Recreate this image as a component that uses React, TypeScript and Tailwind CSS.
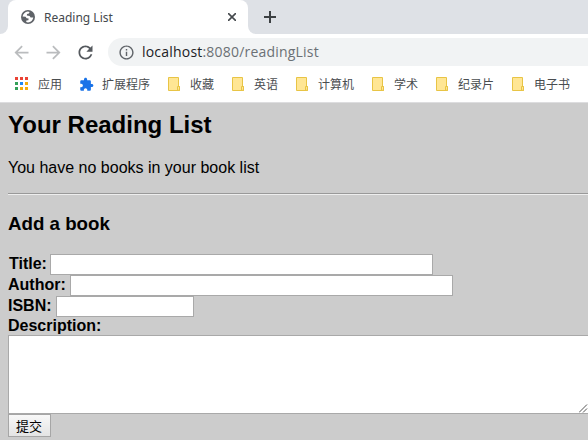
import React from 'react';

function Icon({ d, className }: { d: string; className: string }) {
  return (
    <svg viewBox="0 0 24 24" fill="currentColor" className={className}>
      <path d={d} />
    </svg>
  );
}

const paths = {
  back: 'M20 11H7.83l5.59-5.59L12 4l-8 8 8 8 1.41-1.41L7.83 13H20v-2z',
  forward: 'M12 4l-1.41 1.41L16.17 11H4v2h12.17l-5.58 5.59L12 20l8-8z',
  reload:
    'M17.65 6.35C16.2 4.9 14.21 4 12 4c-4.42 0-7.99 3.58-7.99 8s3.57 8 7.99 8c3.73 0 6.84-2.55 7.73-6h-2.08c-.82 2.33-3.04 4-5.65 4-3.31 0-6-2.69-6-6s2.69-6 6-6c1.66 0 3.14.69 4.22 1.78L13 11h7V4l-2.35 2.35z',
  info: 'M11 17h2v-6h-2v6zm1-15C6.48 2 2 6.48 2 12s4.48 10 10 10 10-4.48 10-10S17.52 2 12 2zm0 18c-4.41 0-8-3.59-8-8s3.59-8 8-8 8 3.59 8 8-3.59 8-8 8zM11 9h2V7h-2v2z',
  puzzle:
    'M20.5 11H19V7c0-1.1-.9-2-2-2h-4V3.5C13 2.12 11.88 1 10.5 1S8 2.12 8 3.5V5H4c-1.1 0-1.99.9-1.99 2v3.8H3.5c1.49 0 2.7 1.21 2.7 2.7s-1.21 2.7-2.7 2.7H2V20c0 1.1.9 2 2 2h3.8v-1.5c0-1.49 1.21-2.7 2.7-2.7 1.49 0 2.7 1.21 2.7 2.7V22H17c1.1 0 2-.9 2-2v-4h1.5c1.38 0 2.5-1.12 2.5-2.5S21.88 11 20.5 11z',
};

const dots = [
  'bg-[#ea4335]', 'bg-[#ea4335]', 'bg-[#ea4335]',
  'bg-[#34a058]', 'bg-[#1e88f5]', 'bg-[#f5ac0a]',
  'bg-[#34a058]', 'bg-[#f5ac0a]', 'bg-[#f5ac0a]',
];

function GlobeIcon() {
  return (
    <svg viewBox="0 0 14 14" className="size-[14px] shrink-0">
      <circle cx="7" cy="7" r="7" fill="#5f6368" />
      <path
        d="M1.6 6.6C1.9 4 4 1.9 6.9 1.6L8.6 2.1 7.9 3.5 6 4.1 5.8 5.6 8.6 5.9 9.6 7.4 12.3 7.5C12 10.1 9.8 12.3 7 12.4L5.2 12 5.4 10.6 7.4 10.2 7.6 8.6 5.6 8.2 4.6 6.7z"
        fill="white"
      />
    </svg>
  );
}

function AppsIcon() {
  return (
    <span className="ml-px grid w-[15px] grid-cols-[3px_3px_3px] gap-[2px] pb-px">
      {dots.map((c, i) => (
        <i key={i} className={`size-[3px] ${c}`} />
      ))}
    </span>
  );
}

function FolderIcon() {
  return (
    <svg viewBox="0 0 16 16" className="size-4" fill="#ffe694" stroke="#e8c445">
      <path d="M2.5 1.5h10v9h1v4h-11z" />
      <path d="M11.5 14v-3.5h2v4z" />
    </svg>
  );
}

function Bookmark({ icon, label }: { icon: React.ReactNode; label: string }) {
  return (
    <div className="flex shrink-0 items-center gap-2">
      {icon}
      <span>{label}</span>
    </div>
  );
}

function Field({ label, labelClass, inputClass }: { label: string; labelClass: string; inputClass: string }) {
  return (
    <label className="flex h-[21px]">
      <span className={`shrink-0 leading-[19px] ${labelClass}`}>{label}</span>
      <input type="text" className={`h-[21px] rounded-none border border-[#a9a9a9] bg-white ${inputClass}`} />
    </label>
  );
}

export default function App() {
  return (
    <div className="flex h-[440px] w-[588px] flex-col overflow-hidden bg-[#cccccc] font-['Liberation_Sans',Arial,sans-serif] text-black">
      <div className="flex h-[34px] shrink-0 bg-[#dee1e6]">
        <div className="flex w-2 items-end bg-white">
          <span className="h-[34px] w-2 rounded-br-lg bg-[#dee1e6]" />
        </div>
        <div className="w-60 bg-[#dee1e6]">
          <div className="flex h-[34px] items-center rounded-t-lg bg-white pl-[13px] text-[#45494d]">
            <GlobeIcon />
            <span className="ml-[9px] w-[179px] pt-px font-['Noto_Sans','Open_Sans',sans-serif] text-[12px] leading-4">
              Reading List
            </span>
            <svg viewBox="0 0 8 8" className="ml-[5px] size-2 shrink-0" stroke="#45494d" strokeWidth="1.6">
              <path d="M0 0l8 8M8 0L0 8" />
            </svg>
          </div>
        </div>
        <div className="flex grow bg-white">
          <div className="flex grow items-center rounded-bl-lg bg-[#dee1e6] pl-4">
            <svg viewBox="0 0 12 12" className="size-3" stroke="#3c4043" strokeWidth="2">
              <path d="M6 0v12M0 6h12" />
            </svg>
          </div>
        </div>
      </div>

      <div className="flex h-9 shrink-0 items-center bg-white pl-[11px]">
        <Icon d={paths.back} className="size-[21px] shrink-0 text-[#babcbe]" />
        <Icon d={paths.forward} className="ml-[11px] size-[21px] shrink-0 text-[#babcbe]" />
        <Icon d={paths.reload} className="ml-[11px] size-[21px] shrink-0 text-[#55595e]" />
        <div className="ml-3 flex h-7 grow items-center rounded-l-full bg-[#f1f3f4] pl-[10px]">
          <Icon d={paths.info} className="size-[17px] shrink-0 text-[#5f6368]" />
          <span className="ml-[7px] font-['Open_Sans',sans-serif] text-[14px] leading-5 tracking-[0.2px] text-[#6b7075]">
            <span className="text-[#202124]">localhost</span>:8080/readingList
          </span>
        </div>
      </div>

      <div className="flex h-8 shrink-0 items-center gap-4 bg-white pb-1 pl-[14px] font-['Noto_Sans_CJK_SC',sans-serif] text-[12px] leading-4 whitespace-nowrap text-[#4a4d50]">
        <Bookmark icon={<AppsIcon />} label="应用" />
        <Bookmark
          icon={
            <span className="flex size-4 items-center pl-px">
              <Icon d={paths.puzzle} className="size-[15px] shrink-0 text-[#1a73e8]" />
            </span>
          }
          label="扩展程序"
        />
        {['收藏', '英语', '计算机', '学术', '纪录片', '电子书'].map((label) => (
          <Bookmark key={label} icon={<FolderIcon />} label={label} />
        ))}
      </div>

      <main className="flex grow flex-col border-t border-[#dddddf] pl-2">
        <h2 className="mt-2 text-[24px] leading-7 font-bold">Your Reading List</h2>
        <p className="mt-5 text-[16px] leading-[18px]">You have no books in your book list</p>
        <hr className="mt-4 h-[2px] border-t border-b border-t-[#999999] border-b-[#eeeeee]" />
        <h3 className="mt-[18px] text-[18.72px] leading-[22px] font-bold">Add a book</h3>
        <form className="mt-[19px] text-[16px] font-bold" onSubmit={(e) => e.preventDefault()}>
          <Field label="Title:" labelClass="w-[42px] pl-px" inputClass="w-[383px]" />
          <Field label="Author:" labelClass="w-[62px]" inputClass="w-[383px]" />
          <Field label="ISBN:" labelClass="w-12" inputClass="w-[138px]" />
          <label className="block h-[18px] leading-[18px]">Description:</label>
          <div className="relative h-[79px] w-[600px]">
            <textarea className="block h-[79px] w-[600px] resize-none border border-[#a9a9a9] bg-white" />
            <svg viewBox="0 0 9 9" className="absolute top-[69px] left-[571px] size-[9px]" stroke="#555555">
              <path d="M0 8.5L8 .5M4 8.5L8 4.5" />
            </svg>
          </div>
          <button className="block h-[23px] w-[43px] border border-[#a6a6a6] bg-linear-to-b from-[#f8f8f8] to-[#e4e4e4] pr-px font-['Noto_Sans_CJK_SC',sans-serif] text-[13px] leading-[20px] font-normal">
            提交
          </button>
        </form>
      </main>
    </div>
  );
}
